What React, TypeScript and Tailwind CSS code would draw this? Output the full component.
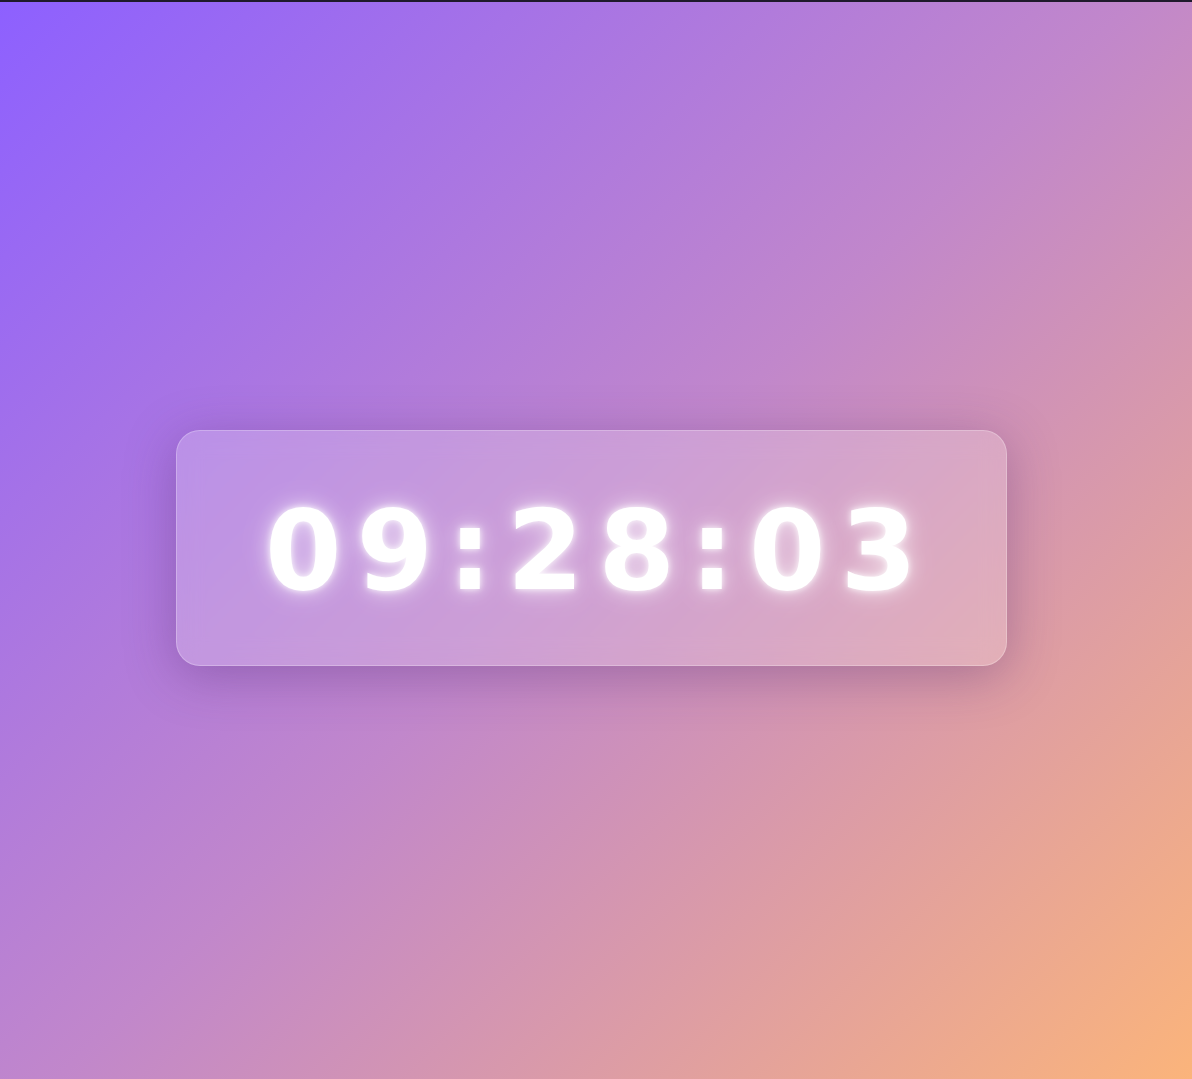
import { useState } from "react";

const pad = (n: number) => String(n).padStart(2, "0");

const Clock = () => {
  // frozen at the time shown in the design
  const [time] = useState({ h: 9, m: 28, s: 3 });

  return (
    <div className="w-[831px] h-[236px] rounded-3xl bg-white/20 border border-white/25 shadow-[0_10px_50px_rgba(80,40,110,0.35)] backdrop-blur-md flex items-center justify-center">
      <span
        className="text-white font-bold text-[110px] leading-none tracking-[15px] pl-[15px] pt-[6px] [text-shadow:0_0_6px_rgba(255,255,255,0.9),0_0_18px_rgba(255,255,255,0.6),0_0_30px_rgba(255,255,255,0.35)]"
        style={{ fontFamily: '"DejaVu Sans", "Liberation Sans", sans-serif' }}
      >
        {pad(time.h)}:{pad(time.m)}:{pad(time.s)}
      </span>
    </div>
  );
};

export default function App() {
  return (
    <div className="min-h-screen flex flex-col bg-[linear-gradient(135deg,#8d60ff_0%,#c187cb_50%,#fbb47b_100%)]">
      <div className="h-[2px] bg-[#1f1a2c]" />
      <main className="flex-1 flex items-center justify-center pt-[14px] pr-[10px]">
        <Clock />
      </main>
    </div>
  );
}
